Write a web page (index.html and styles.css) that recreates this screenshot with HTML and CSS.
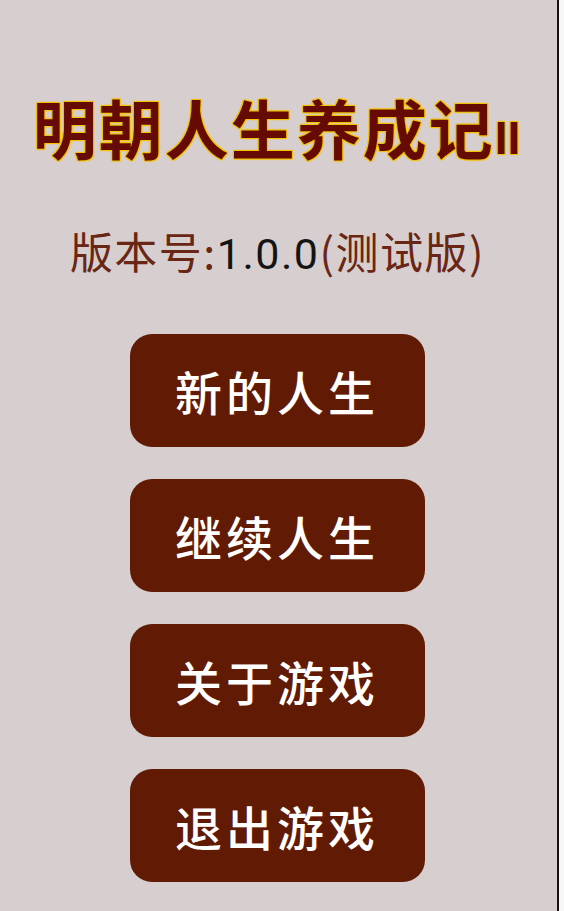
FILE: index.html
```html
<!DOCTYPE html>
<html lang="zh-CN">
<head>
    <meta charset="UTF-8">
    <meta name="viewport" content="width=device-width, initial-scale=1.0">
    <title>明朝人生养成记II</title>
    <link rel="stylesheet" href="styles.css">
</head>
<body>
    <div class="screen">
        <h1 class="title">明朝人生养成记<span class="title-num">II</span></h1>
        <p class="version">版本号:<span class="version-num">1.0.0</span>(测试版)</p>
        <div class="menu">
            <button class="menu-btn">新的人生</button>
            <button class="menu-btn">继续人生</button>
            <button class="menu-btn">关于游戏</button>
            <button class="menu-btn">退出游戏</button>
        </div>
    </div>
    <div class="edge"></div>
</body>
</html>
```

FILE: styles.css
```css
body { margin: 0; display: flex; height: 911px; overflow: hidden; background: #f7f7f7; font-family: "Noto Sans CJK SC", "Noto Sans", sans-serif; }
.screen { width: 557px; height: 911px; background: #d7cfcf; border-right: 2px solid #151515; display: flex; flex-direction: column; align-items: center; }
.edge { flex: 1; }
.title { margin: 90px 0 0 -4px; font-size: 64px; font-weight: 700; line-height: 72px; color: #660a04; letter-spacing: 2px;
    text-shadow: 0 0 1px #f2c200, 1px 1px 1px #f2c200, -1px -1px 1px #f2c200, 1px -1px 1px #f2c200, -1px 1px 1px #f2c200; }
.title-num { font-family: "Liberation Sans", Arial, sans-serif; font-size: 46px; font-weight: 700; letter-spacing: 0; }
.version { margin: 50px 0 0 -2px; font-size: 43px; line-height: 52px; letter-spacing: 1.5px; color: #6a2614; }
.version-num { font-family: Roboto, "Liberation Sans", sans-serif; color: #141414; }
.menu { margin: 54px 3px 0 0; display: flex; flex-direction: column; gap: 32px; }
.menu-btn { width: 295px; height: 113px; border: none; border-radius: 22px; background: #611a04; color: #fff; font-family: "Noto Sans CJK SC", sans-serif; font-size: 47px; font-weight: 500; letter-spacing: 4px; cursor: pointer; }
```
